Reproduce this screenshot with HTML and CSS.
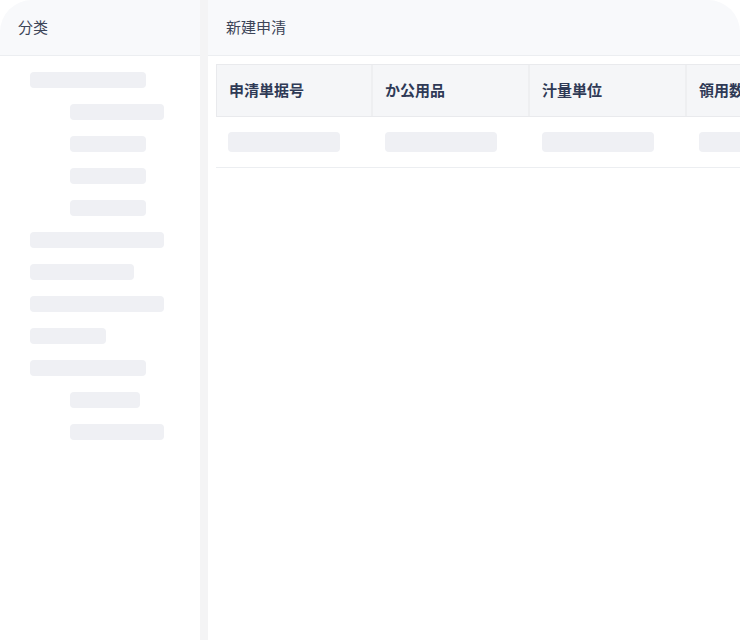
FILE: index.html
```html
<!DOCTYPE html>
<html lang="ja">
<head>
<meta charset="utf-8">
<link rel="stylesheet" href="styles.css">
</head>
<body>
<div class="app">
  <aside class="side">
    <div class="head">分类</div>
    <div class="tree">
      <div class="sk" style="width:116px"></div>
      <div class="sk sub" style="width:94px"></div>
      <div class="sk sub" style="width:76px"></div>
      <div class="sk sub" style="width:76px"></div>
      <div class="sk sub" style="width:76px"></div>
      <div class="sk" style="width:134px"></div>
      <div class="sk" style="width:104px"></div>
      <div class="sk" style="width:134px"></div>
      <div class="sk" style="width:76px"></div>
      <div class="sk" style="width:116px"></div>
      <div class="sk sub" style="width:70px"></div>
      <div class="sk sub" style="width:94px"></div>
    </div>
  </aside>
  <div class="divider"></div>
  <main class="main">
    <div class="head">新建申清</div>
    <div class="tablewrap">
      <div class="row thead">
        <div class="cell first">申清単据号</div>
        <div class="cell">か公用品</div>
        <div class="cell">汁量単位</div>
        <div class="cell">領用数量</div>
      </div>
      <div class="row tbody">
        <div class="cell first"><div class="sk2"></div></div>
        <div class="cell"><div class="sk2"></div></div>
        <div class="cell"><div class="sk2"></div></div>
        <div class="cell"><div class="sk2"></div></div>
      </div>
    </div>
  </main>
</div>
</body>
</html>
```

FILE: styles.css
```css
html, body {
  margin: 0;
  padding: 0;
  background: #ffffff;
  font-family: "Noto Sans CJK JP", "Noto Sans CJK SC", "Noto Sans", sans-serif;
}
.app {
  display: flex;
  width: 740px;
  height: 640px;
  overflow: hidden;
}
.side {
  width: 200px;
  flex: none;
  background: #ffffff;
  border-top-left-radius: 32px;
  overflow: hidden;
}
.divider {
  width: 8px;
  flex: none;
  background: #f4f4f5;
}
.main {
  flex: 1;
  min-width: 0;
  background: #ffffff;
  border-top-right-radius: 32px;
  overflow: hidden;
}
.head {
  height: 52px;
  padding-bottom: 3px;
  border-bottom: 1px solid #eceef1;
  background: #f8f9fb;
  display: flex;
  align-items: center;
  font-size: 15px;
  color: #3d4558;
  box-sizing: content-box;
}
.side .head { padding-left: 18px; }
.main .head { padding-left: 18px; }
.tree {
  padding: 16px 0 0 30px;
  display: flex;
  flex-direction: column;
  gap: 16px;
}
.sk {
  height: 16px;
  border-radius: 4px;
  background: #eff0f4;
}
.sk.sub { margin-left: 40px; }
.tablewrap {
  padding: 8px 0 0 8px;
}
.row {
  display: flex;
  width: max-content;
}
.cell {
  width: 157px;
  flex: none;
  box-sizing: border-box;
  padding-left: 12px;
}
.thead {
  height: 53px;
  background: #f5f6f8;
  border-top: 1px solid #e9eaed;
  border-bottom: 1px solid #e9eaed;
  box-sizing: border-box;
}
.thead .cell {
  border-right: 2px solid #eeeff1;
  display: flex;
  align-items: center;
  padding-bottom: 3px;
  font-size: 15px;
  font-weight: 600;
  color: #2f3a56;
}
.thead .cell.first {
  border-left: 1px solid #e9eaed;
}
.tbody {
  height: 51px;
  border-bottom: 1px solid #eceef1;
  box-sizing: border-box;
}
.tbody .cell {
  padding-top: 15px;
}
.sk2 {
  width: 112px;
  height: 20px;
  border-radius: 4px;
  background: #eff0f4;
}
```
